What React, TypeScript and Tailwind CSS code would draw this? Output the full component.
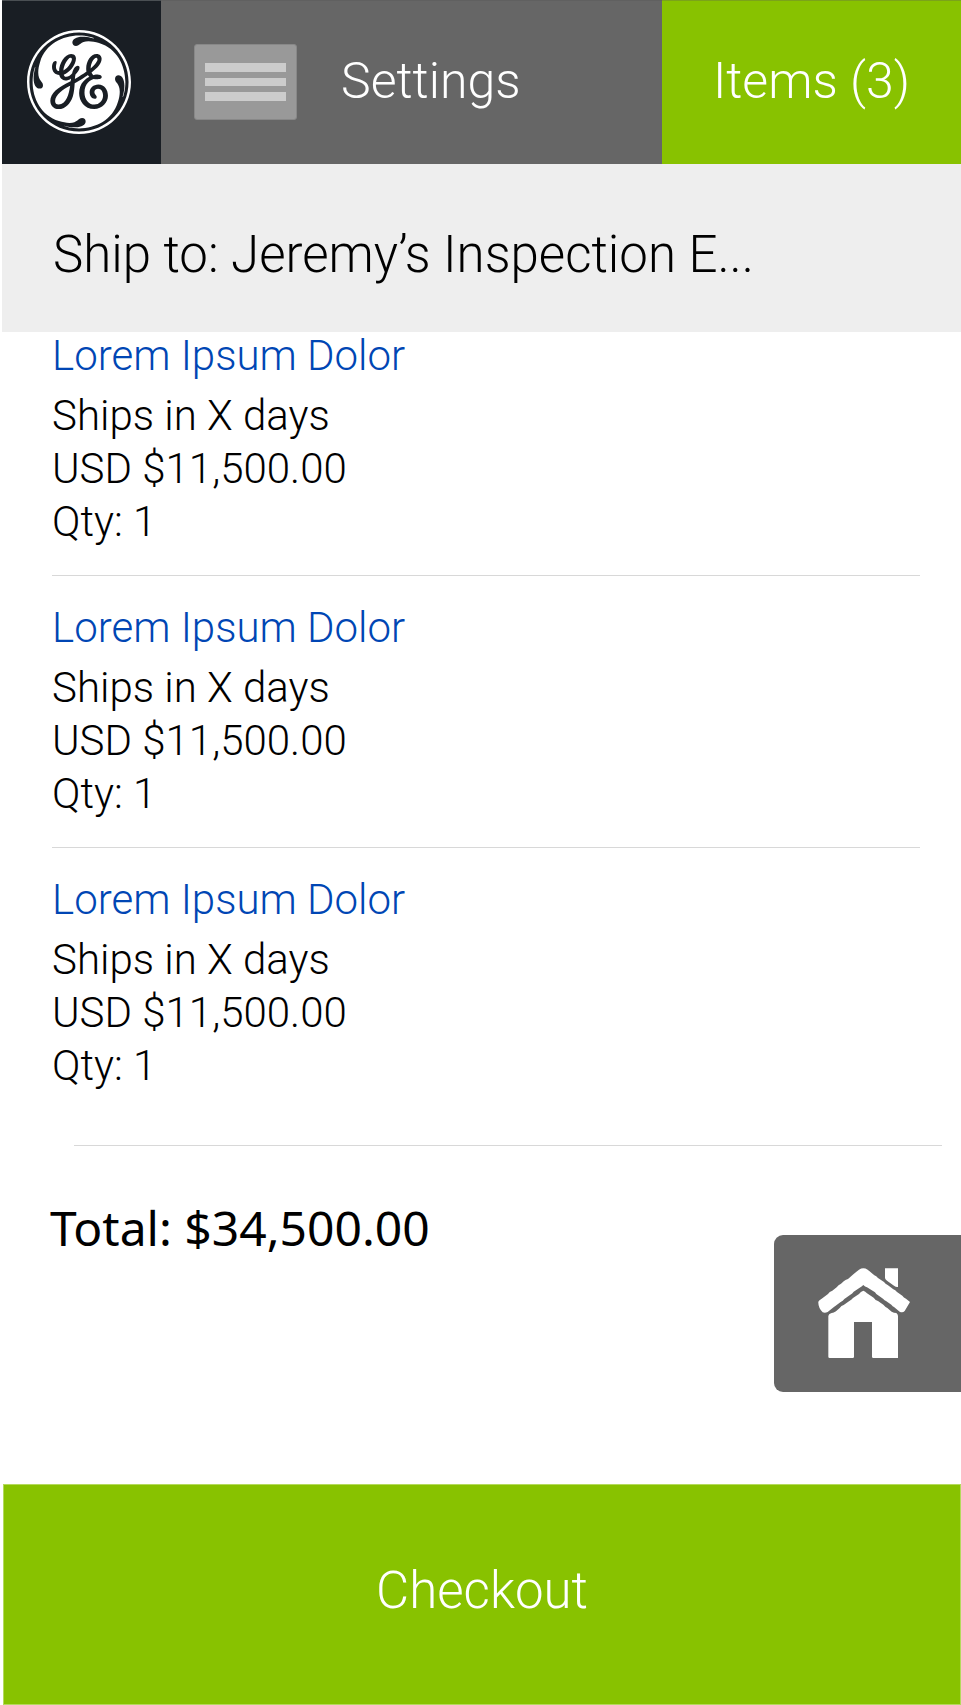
import React from "react";
import { SiGeneralelectric } from "react-icons/si";

type Item = { id: number; name: string; shipping: string; price: string; quantity: number };

const items: Item[] = [
  { id: 1, name: "Lorem Ipsum Dolor", shipping: "Ships in X days", price: "USD $11,500.00", quantity: 1 },
  { id: 2, name: "Lorem Ipsum Dolor", shipping: "Ships in X days", price: "USD $11,500.00", quantity: 1 },
  { id: 3, name: "Lorem Ipsum Dolor", shipping: "Ships in X days", price: "USD $11,500.00", quantity: 1 },
];

function MenuIcon() {
  return (
    <svg viewBox="0 0 103 76" className="h-[76px] w-[103px]" aria-hidden="true">
      <rect x="0.5" y="0.5" width="102" height="75" rx="2.5" fill="#999999" stroke="#888888" />
      <rect x="11" y="19" width="81" height="9" fill="#cccccc" />
      <rect x="11" y="34" width="81" height="8" fill="#cccccc" />
      <rect x="11" y="48" width="81" height="9" fill="#cccccc" />
    </svg>
  );
}

function HomeIcon() {
  return (
    <svg viewBox="234 444 276 270" className="h-[90px] w-[92px]" fill="#ffffff" aria-hidden="true">
      <path d="M435 445H474V501Q468 502 462 497L441 482Q435 478 435 474Z" />
      <path d="M357 449Q370 441 383 449L403 466Q409 468 414 474L432 486Q436 492 443 495L460 508Q466 510 471 516L487 527Q491 533 498 536L510 546L494 573Q488 580 479 575L462 561Q458 559 454 554L438 543Q434 542 429 536L409 522Q406 516 399 513L381 502Q375 500 370 495Q365 500 359 503L341 515Q337 521 331 524L313 537Q309 543 302 546L286 558Q282 560 277 565L263 576Q255 580 248 577Q234 562 235 545Q238 541 243 538L264 522Q268 515 277 512L290 502Q295 494 303 491L312 483Q318 479 324 477L341 462Z" />
      <path d="M370 512Q376 514 381 520L401 533Q406 541 414 543L430 554Q436 561 442 564L455 575Q462 579 469 579Q474 583 474 588V714H400Q396 714 396 710V606H342V710Q342 714 338 714H269Q265 714 265 710V588Q266 582 273 580Q282 579 288 574L299 564Q304 557 311 555L328 543Q334 540 339 534L357 522Q362 515 370 512Z" />
    </svg>
  );
}

export default function App() {
  return (
    <div className="flex min-h-screen flex-col bg-white font-['Roboto','Noto_Sans',sans-serif] font-light text-black">
      <header className="ml-0.5 flex h-[164px] text-[50px] text-white">
        <a href="#" aria-label="GE" className="flex w-[159px] shrink-0 items-center border-t border-[#4a4f53] bg-[#191e24] pb-0.5 pl-[25px]">
          <SiGeneralelectric className="size-[104px]" />
        </a>
        <button type="button" className="flex grow items-center gap-11 border-t border-[#606060] bg-[#666666] pb-0.5 pl-[33px]">
          <MenuIcon />
          Settings
        </button>
        <button type="button" className="w-[299px] shrink-0 border-t border-[#7ba31a] bg-[#88c200] pb-0.5">
          Items (3)
        </button>
      </header>

      <h1 className="ml-0.5 flex h-[168px] items-center bg-[#eeeeee] pt-3.5 pr-10 pl-[51px] text-[51px] font-light">
        Ship to: Jeremy’s Inspection E...
      </h1>

      <ul className="mr-[41px] ml-[52px] text-[42px] leading-[53px]">
        {items.map((item) => (
          <li key={item.id} className="border-b border-[#d8d8d8] pt-7 pb-[27px] first:pt-0 last:border-b-0 last:pb-[53px]">
            <a href="#" className="mb-[9px] block leading-[48px] text-[#0046b4]">{item.name}</a>
            <p>{item.shipping}</p>
            <p>{item.price}</p>
            <p>Qty: {item.quantity}</p>
          </li>
        ))}
      </ul>

      <hr className="mr-[19px] ml-[74px] border-[#d8d8d8]" />

      <section className="flex items-start justify-between pl-[50px]">
        <p className="pt-[52px] font-['Noto_Sans',sans-serif] text-[48px] leading-[60px] font-normal">Total: $34,500.00</p>
        <button type="button" aria-label="Home" className="mt-[89px] flex h-[157px] w-[187px] shrink-0 rounded-l-[9px] bg-[#666666] pt-[33px] pl-11">
          <HomeIcon />
        </button>
      </section>

      <button type="button" className="mt-[92px] ml-[3px] h-[221px] border border-[#b4da5c] bg-[#88c200] pb-1.5 text-[51px] text-white">
        Checkout
      </button>
    </div>
  );
}
